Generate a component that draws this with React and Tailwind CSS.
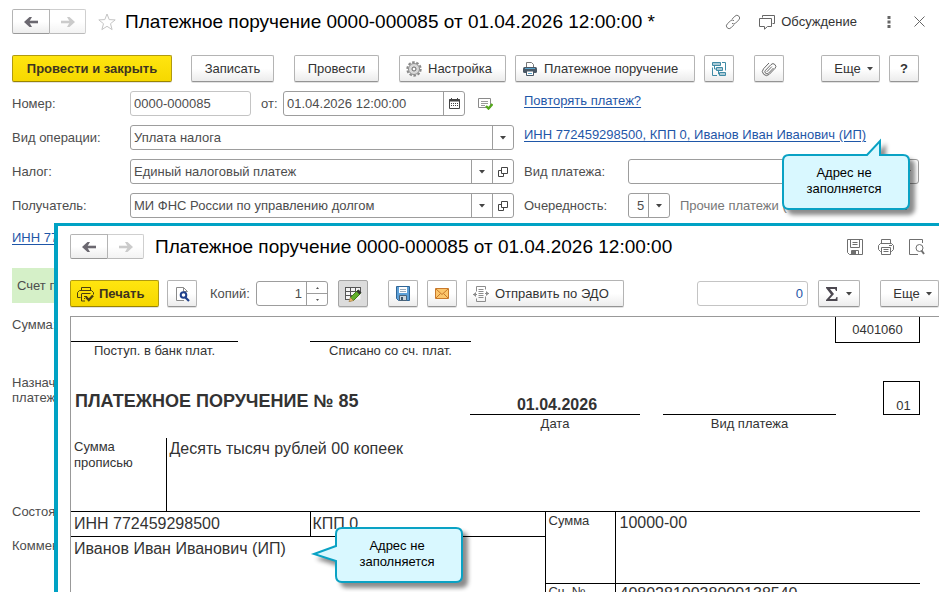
import { useState } from 'react'

function Icon({ w = 16, h = 16, children, className = '' }) {
  return (
    <svg
      width={w}
      height={h}
      viewBox={`0 0 ${w} ${h}`}
      fill="none"
      stroke="currentColor"
      aria-hidden="true"
      className={`shrink-0 ${className}`}
    >
      {children}
    </svg>
  )
}

function Caret() {
  return (
    <Icon w={6} h={4} className="text-[#444]">
      <path d="M0 0h6L3 3.5z" fill="currentColor" stroke="none" />
    </Icon>
  )
}

function ArrowIcon({ flip }) {
  return (
    <Icon w={14} h={12} className={flip ? 'rotate-180 text-[#cbcbcb]' : 'text-[#6b6870]'}>
      <path d="M14 6H3" strokeWidth="2.6" />
      <path d="M0 6 5.500 1H8L5 6l3 5H5.500z" fill="currentColor" stroke="none" />
    </Icon>
  )
}

function LinkIcon() {
  return (
    <Icon className="text-[#777]">
      <path d="M7 5.2 10 2.1a2.6 2.6 0 0 1 3.8 3.8l-3.2 3.2a2.6 2.6 0 0 1-3.6.2" />
      <path d="m9 10.8-3 3a2.6 2.6 0 0 1-3.8-3.8l3.2-3.1A2.6 2.6 0 0 1 9 6.7" />
    </Icon>
  )
}

function ChatIcon() {
  return (
    <Icon w={17} className="text-[#666]">
      <path d="M3.5 3.5v-2h12v8h-2" />
      <path d="M.5 4.5h12v8h-4l-3 2.7v-2.7h-5z" strokeLinejoin="round" />
    </Icon>
  )
}

function GearIcon() {
  return (
    <Icon className="text-[#8a8a8a]">
      <circle cx="8" cy="8" r="6.7" strokeWidth="2" strokeDasharray="2.6 1.61" />
      <circle cx="8" cy="8" r="5.5" fill="#d9d9d9" />
      <circle cx="8" cy="8" r="2" fill="#fff" stroke="#666" />
    </Icon>
  )
}

function PrinterIcon() {
  return (
    <Icon>
      <path d="M4.5 6V1.5h5l2 2V6" fill="#fff" stroke="#777" />
      <rect x="1" y="6" width="14" height="6" rx="1.5" fill="#4a5866" stroke="none" />
      <path d="M3 7.5h10" stroke="#5aa5cc" />
      <path d="M4.5 10h7v4.5h-7z" fill="#fff" stroke="#4a5866" />
      <path d="M6 12.5h4" stroke="#5aa5cc" />
    </Icon>
  )
}

function TreeIcon() {
  return (
    <Icon className="text-[#3f8aa5]">
      <path d="M1.5 1.5h8v3h-8zM5.5 6.5h6v3h-6zM8.500 11.5h6v3h-6z" fill="#a9cad6" />
      <path d="M3.5 4.5V8h2M7.5 9.5V13h1M11 1.5h3.5v8M1.5 6.5v8H6" />
    </Icon>
  )
}

function ClipIcon() {
  return (
    <Icon className="text-[#666]">
      <path d="m12.5 7-5 5.2a2 2 0 0 1-3-2.9l5.5-5.7a2.7 2.7 0 0 1 4 3.8l-5.8 6a4 4 0 0 1-5.700-5.600L8 2" />
      <path d="m5.8 10.8 5-5.2" />
    </Icon>
  )
}

function CalendarIcon() {
  return (
    <Icon w={11} h={11} className="text-[#444]">
      <path d="M.5 1.5h10v9H.5z" />
      <path d="M0 2.5h11" strokeWidth="2" />
      <path d="M2.5 0v2M8.5 0v2" />
      <path d="M2 5.5h7M2 7.5h7" strokeDasharray="1 1" />
    </Icon>
  )
}

function PostedIcon() {
  return (
    <Icon w={15} h={13}>
      <path d="M.5 1.5h12v9H.5z" stroke="#8a8a8a" fill="#fff" />
      <path d="M3 4.5h7M3 6.5h7M3 8.5h4" stroke="#999" />
      <path d="m8 9 2.5 2.5L14.500 7" stroke="#55a81c" strokeWidth="2.4" />
    </Icon>
  )
}

function OpenIcon() {
  return (
    <Icon w={10} h={10} className="text-[#444]">
      <path d="M3.5.5h6v6h-6zM3.5 3.5h-3v6h5v-3" />
    </Icon>
  )
}

function DiskIcon() {
  return (
    <Icon className="text-[#6f6f6f]">
      <path d="M.5.5h15v15H2.500l-2-2z" />
      <path d="M3.5.5v8h9v-8M5.5 3.5h5M5.5 5.500h5M4.5 15.5v-4h7v4" />
      <path d="M5 12h4v3H5z" fill="currentColor" stroke="none" />
    </Icon>
  )
}

function PrintOutlineIcon() {
  return (
    <Icon className="text-[#6f6f6f]">
      <path d="M3.5 4.5v-4h9v4M3.5 12.5h-1l-2-2v-4l2-2h11l2 2v4l-2 2h-1" />
      <path d="M3.5 8.5h9v7h-9zM5.5 10.5h5M5.5 12.5h5M11 6.5h3" />
    </Icon>
  )
}

function PreviewOutlineIcon() {
  return (
    <Icon className="text-[#6f6f6f]">
      <path d="M13.5 4V.5H.5v15H9" />
      <circle cx="10.5" cy="9" r="3.5" />
      <path d="m12.500 11.500 2.5 3.500" strokeWidth="2" />
    </Icon>
  )
}

function PrintCheckIcon() {
  return (
    <Icon w={17} className="text-[#4a3f10]">
      <path d="M4.5 4.5v-3h9v3M3.5 11.5h-3v-5l2-2h12l2 2v2M4.5 7.5h9" />
      <path d="M4.5 8v7H8M7 10.5h3M7 12.5h1" />
      <path d="m9 11 2.800 3L16 9.500" strokeWidth="2.4" />
    </Icon>
  )
}

function PreviewIcon() {
  return (
    <Icon w={15}>
      <path d="M9 14.5H1.5v-13h7l4 4" fill="#fff" stroke="#8a8a8a" />
      <path d="M8.5 1.5v4h4" stroke="#8a8a8a" />
      <circle cx="8.5" cy="9" r="2.8" fill="#fff" stroke="#20418c" strokeWidth="2" />
      <path d="m10.5 11.5 3.5 3.5" stroke="#20418c" strokeWidth="2.2" />
    </Icon>
  )
}

function EditTableIcon() {
  return (
    <Icon w={17}>
      <path d="M.5 1.500h15v12H.5z" fill="#f4f4f4" stroke="none" />
      <path d="M0 1.5h16M0 5.5h16M0 9.5h12M0 13.5h5M.5 1v13M5.5 1v12M10.5 1v6M15.5 1v4" stroke="#555" />
      <path d="m5.5 11.5 7-7 3 3-7 7z" fill="#62b02c" stroke="#3f7d15" />
      <path d="m11.500 5.500 2-2 3 3-2 2z" fill="#333" stroke="none" />
      <path d="m5.3 11.3 3.2 3.2L4 16z" fill="#e3b36a" stroke="#8a6a35" strokeWidth=".5" />
    </Icon>
  )
}

function SaveIcon() {
  return (
    <Icon w={14} h={15}>
      <path d="M.5.5h13v14H2.500l-2-2z" fill="#5da0d8" stroke="#2f6596" />
      <path d="M3 1h8v6H3z" fill="#fff" stroke="none" />
      <path d="M4 3.5h6M4 5.5h6" stroke="#9ab" />
      <path d="M3.5 9.5h7v5h-7z" fill="#c9d4dc" stroke="#4a6379" />
      <path d="M5 11h2v3H5z" fill="#3c5468" stroke="none" />
    </Icon>
  )
}

function MailIcon() {
  return (
    <Icon w={14} h={11}>
      <path d="M.5.5h13v10H.5z" fill="#fbc66d" stroke="#c9792b" />
      <path d="m1 1 6 5.5L13 1M1 10l4.500-4.500M13 10 8.500 5.500" stroke="#c9792b" />
    </Icon>
  )
}

function EdoIcon() {
  return (
    <Icon className="text-[#8c8c8c]">
      <path d="M3.5 5.500v-5h9v3M12.5 10.500v5h-9v-3" />
      <path d="M5.500 3.5h5M5.500 5.5h5M5.500 7.5h5M5.500 9.5h5M5.500 11.500h5" />
      <path d="M4 8.500H0M16 7.500h-4" />
      <path d="m0 8.500 3-2.500v5zM16 7.500 13 5v5z" fill="currentColor" stroke="none" />
    </Icon>
  )
}

function SigmaIcon() {
  return (
    <Icon w={12} h={14} className="text-[#4c4850]">
      <path d="M0 0h11v4h-1L9 2H4l4 5-4.500 5H9.500l1-2h1v4H0v-1l5-5.500L0 1z" fill="currentColor" stroke="none" />
    </Icon>
  )
}

function Button({ children, primary, pressed, start, className = '', ...rest }) {
  const look = primary
    ? 'border-[#b09a10] border-b-[#9a8400] bg-linear-to-b from-[#ffe50f] to-[#f6d800] font-bold text-[#3d3420]'
    : pressed
      ? 'border-[#a5a5a5] bg-[#dcdcdc] text-[#333]'
      : 'border-[#b4b4b4] border-b-[#949494] bg-linear-to-b from-white from-50% to-[#ececec] text-[#333]'
  const align = start ? 'justify-start pl-1.5' : 'justify-center'
  return (
    <button
      type="button"
      className={`flex h-[27px] shrink-0 items-center rounded-[2px] border shadow-[0_1px_0_#e2e2e2] ${align} ${look} ${className}`}
      {...rest}
    >
      {children}
    </button>
  )
}

function NavButtons() {
  return (
    <div className="flex h-[25px] shrink-0">
      <button
        type="button"
        aria-label="Назад"
        className="flex w-[38px] items-center justify-center rounded-l-[2px] border border-[#b4b4b4] border-b-[#999] bg-linear-to-b from-white from-50% to-[#ededed]"
      >
        <ArrowIcon />
      </button>
      <button
        type="button"
        aria-label="Вперед"
        className="flex w-9 items-center justify-center rounded-r-[2px] border border-l-0 border-[#cfcfcf] border-b-[#bbb] bg-linear-to-b from-white from-50% to-[#f3f3f3]"
      >
        <ArrowIcon flip />
      </button>
    </div>
  )
}

const fieldBox = 'flex h-[25px] min-w-0 overflow-hidden rounded-[3px] border bg-white'

function SelectField({ id, value, openable, className = '' }) {
  return (
    <div className={`${fieldBox} border-[#9d9d9d] ${className}`}>
      <div className="grid min-w-0 flex-1">
        <select id={id} className="col-start-1 row-start-1 min-w-0 appearance-none px-[3px] outline-none">
          <option>{value}</option>
        </select>
        <span className="pointer-events-none col-start-1 row-start-1 flex w-[21px] items-center justify-center justify-self-end border-l border-[#9d9d9d]">
          <Caret />
        </span>
      </div>
      {openable && (
        <button type="button" aria-label="Открыть" className="flex w-[21px] items-center justify-center border-l border-[#9d9d9d]">
          <OpenIcon />
        </button>
      )}
    </div>
  )
}

const calloutShapes = {
  top: 'M32 18H110L123 4V18H146Q152 18 152 24V66Q152 72 146 72H32Q26 72 26 66V24Q26 18 32 18z',
  left: 'M32 18H146Q152 18 152 24V66Q152 72 146 72H32Q26 72 26 66V51L4 44L26 36V24Q26 18 32 18z',
}

// Box is 126x54 with a 26px / 18px margin that leaves room for the tail and the shadow.
function Callout({ tail, className }) {
  return (
    <div className={`pointer-events-none absolute z-20 h-[86px] w-[166px] ${className}`}>
      <svg width="166" height="86" viewBox="0 0 166 86" aria-hidden="true" className="drop-shadow-[5px_5px_2px_rgba(0,0,0,0.45)]">
        <path d={calloutShapes[tail]} fill="#d9f8ff" stroke="#0aa2c4" strokeWidth="2" />
      </svg>
      <p className="absolute inset-x-0 top-0 pt-7 pr-[18px] pl-[26px] text-center leading-4 text-black">
        Адрес не
        <br />
        заполняется
      </p>
    </div>
  )
}

function PaymentForm() {
  return (
    <main className="px-3 pt-[9px] pr-5 text-[#4d4d4d]">
      <header className="flex h-[25px] items-center">
        <NavButtons />
        <button type="button" aria-label="В избранное" className="ml-3 text-[#c4c4c4]">
          <Icon w={18} h={18}>
            <path d="m9 1 2.2 5.600 6 .3-4.700 3.800 1.600 5.900L9 13.300l-5.100 3.300 1.600-5.900L.8 6.900l6-.3z" />
          </Icon>
        </button>
        <h1 className="ml-[9px] text-[19px] leading-6 whitespace-nowrap text-black">
          Платежное поручение 0000-000085 от 01.04.2026 12:00:00 *
        </h1>
        <div className="ml-auto flex shrink-0 items-center text-[#333]">
          <button type="button" aria-label="Ссылка">
            <LinkIcon />
          </button>
          <button type="button" className="ml-[18px] flex items-center gap-[5px]">
            <ChatIcon />
            Обсуждение
          </button>
          <button type="button" aria-label="Меню" className="ml-[30px]">
            <Icon w={4} h={12} className="text-[#666]">
              <path d="M.5 0h3v3h-3zM.5 4.5h3v3h-3zM.5 9h3v3h-3z" fill="currentColor" stroke="none" />
            </Icon>
          </button>
          <button type="button" aria-label="Закрыть" className="-mr-1.5 ml-[23px]">
            <Icon w={11} h={11} className="text-[#666]">
              <path d="m.5.5 10 10M10.5.5l-10 10" />
            </Icon>
          </button>
        </div>
      </header>

      <div className="mt-[21px] flex">
        <Button primary className="w-40">Провести и закрыть</Button>
        <Button className="ml-[19px] w-[83px]">Записать</Button>
        <Button className="ml-5 w-[85px]">Провести</Button>
        <Button start className="ml-5 w-[107px] gap-1.5">
          <GearIcon />
          Настройка
        </Button>
        <Button start className="ml-[9px] w-[180px] gap-1.5">
          <PrinterIcon />
          Платежное поручение
        </Button>
        <Button className="ml-[9px] w-[30px]" aria-label="Структура подчиненности">
          <TreeIcon />
        </Button>
        <Button className="ml-5 w-[30px]" aria-label="Присоединенные файлы">
          <ClipIcon />
        </Button>
        <Button className="ml-auto w-[59px] gap-1.5 pl-1.5">
          Еще
          <Caret />
        </Button>
        <Button className="ml-[9px] w-[30px] font-bold">?</Button>
      </div>

      <div className="relative mt-[9px] grid grid-cols-[502px_minmax(0,1fr)] gap-x-[10px] gap-y-[9px]">
        <div className="flex items-center">
          <label htmlFor="number" className="w-[118px] shrink-0">Номер:</label>
          <div className={`${fieldBox} w-[121px] border-[#c4c4c4]`}>
            <input id="number" defaultValue="0000-000085" className="w-full px-[3px] outline-none" />
          </div>
          <label htmlFor="date" className="ml-2.5 w-[22px]">от:</label>
          <div className={`${fieldBox} w-[182px] border-[#9d9d9d]`}>
            <input id="date" defaultValue="01.04.2026 12:00:00" className="min-w-0 flex-1 px-[3px] outline-none" />
            <button type="button" aria-label="Выбрать дату" className="flex w-[21px] items-center justify-center border-l border-[#9d9d9d]">
              <CalendarIcon />
            </button>
          </div>
          <span className="ml-[13px]">
            <PostedIcon />
          </span>
        </div>
        <a href="#repeat" className="mt-0.5 justify-self-start text-[#1f57a8] underline underline-offset-2">Повторять платеж?</a>

        <div className="flex items-center">
          <label htmlFor="operation" className="w-[118px] shrink-0">Вид операции:</label>
          <SelectField id="operation" value="Уплата налога" className="flex-1" />
        </div>
        <a href="#payer" className="mt-0.5 justify-self-start text-[#1f57a8] underline underline-offset-2">
          ИНН 772459298500, КПП 0, Иванов Иван Иванович (ИП)
        </a>

        <div className="flex items-center">
          <label htmlFor="tax" className="w-[118px] shrink-0">Налог:</label>
          <SelectField id="tax" value="Единый налоговый платеж" openable className="flex-1" />
        </div>
        <div className="flex items-center">
          <label htmlFor="kind" className="w-[104px] shrink-0">Вид платежа:</label>
          <SelectField id="kind" value="" className="flex-1" />
        </div>

        <div className="flex items-center">
          <label htmlFor="payee" className="w-[118px] shrink-0">Получатель:</label>
          <SelectField id="payee" value="МИ ФНС России по управлению долгом" openable className="flex-1" />
        </div>
        <div className="flex items-center">
          <label htmlFor="order" className="w-[104px] shrink-0">Очередность:</label>
          <SelectField id="order" value="5" className="w-[42px] shrink-0 [&_select]:pl-2" />
          <span className="mr-1.5 ml-2.5 truncate text-[#777]">Прочие платежи (в т.ч. налоги и взносы в бюджет)</span>
        </div>

        <Callout tail="top" className="-right-1 top-[46px]" />
      </div>

      <div className="mt-3">
        <a href="#payee-details" className="text-[#1f57a8] underline underline-offset-2">ИНН 7727406020</a>
      </div>
      <div className="mt-[22px] flex h-[35px] items-center bg-[#d5f0c8] px-[5px]">Счет получателя</div>
      <div className="mt-[14px]">Сумма:</div>
      <div className="mt-[42px] leading-[15px]">
        Назначение
        <br />
        платежа:
      </div>
      <div className="mt-[99px]">Состояние:</div>
      <div className="mt-[18px]">Комментарий:</div>
    </main>
  )
}

function PrintedOrder() {
  return (
    <div className="mt-[9px] ml-3 min-h-0 flex-1 overflow-hidden border-t border-l border-[#999] pr-[19px] text-[#333]">
      <div className="flex">
        <div className="mt-6 w-[167px] border-t border-black pt-px text-center">Поступ. в банк плат.</div>
        <div className="mt-6 ml-[72px] w-[161px] border-t border-black pt-px text-center">Списано со сч. плат.</div>
        <div className="ml-auto flex h-[26px] w-[85px] items-center justify-center border border-t-0 border-black">0401060</div>
      </div>

      <div className="mt-[22px] flex h-[53px]">
        <h2 className="w-[399px] pt-2 pl-1 text-[18px] leading-6 font-bold">ПЛАТЕЖНОЕ ПОРУЧЕНИЕ № 85</h2>
        <div className="w-[170px] text-center">
          <div className="flex h-[34px] items-end justify-center border-b border-black pl-1 text-[16px] leading-[18px] font-bold">01.04.2026</div>
          <div className="pt-px">Дата</div>
        </div>
        <div className="ml-[23px] w-[173px] text-center">
          <div className="h-[34px] border-b border-black" />
          <div className="pt-px">Вид платежа</div>
        </div>
        <div className="ml-auto flex h-[34px] w-[37px] items-end justify-center border border-black pl-1">01</div>
      </div>

      <table className="mt-1 w-full table-fixed border-collapse text-left align-top text-[16px] leading-5">
        <colgroup>
          <col className="w-[95px]" />
          <col className="w-36" />
          <col className="w-[235px]" />
          <col className="w-[70px]" />
          <col />
        </colgroup>
        <tbody>
          <tr className="h-[73px]">
            <th className="border-r border-black pt-px pl-[3px] align-top text-[13px] leading-4 font-normal">
              Сумма
              <br />
              прописью
            </th>
            <td colSpan={4} className="pt-px pl-[3px] align-top">Десять тысяч рублей 00 копеек</td>
          </tr>
          <tr className="h-[25px]">
            <td colSpan={2} className="border-y border-r border-black pl-[3px]">ИНН 772459298500</td>
            <td className="border-y border-black pl-0.5">КПП 0</td>
            <th rowSpan={2} className="border border-black pt-px pl-[3px] align-top text-[13px] leading-4 font-normal">Сумма</th>
            <td rowSpan={2} className="border-y border-black pt-px pl-1 align-top">10000-00</td>
          </tr>
          <tr className="h-[47px]">
            <td colSpan={3} rowSpan={2} className="relative pt-0.5 pl-[3px] align-top">
              Иванов Иван Иванович (ИП)
              <Callout tail="left" className="-top-[27px] left-[239px] text-[13px]" />
            </td>
          </tr>
          <tr className="h-[47px]">
            <th className="border-x border-black pl-[3px] align-top text-[13px] leading-4 font-normal">Сч. №</th>
            <td className="pl-1 align-top">40802810038000138540</td>
          </tr>
        </tbody>
      </table>
    </div>
  )
}

function PrintWindow() {
  const [copies, setCopies] = useState(1)

  return (
    <section className="absolute top-[223px] right-0 bottom-0 left-[54px] z-10 flex flex-col border-t-[3px] border-l-4 border-[#00a2c4] bg-white pt-2 text-[#4d4d4d]">
      <header className="flex h-[25px] items-center pr-3.5 pl-3">
        <NavButtons />
        <h2 className="ml-[11px] text-[19px] leading-6 whitespace-nowrap text-black">
          Платежное поручение 0000-000085 от 01.04.2026 12:00:00
        </h2>
        <div className="ml-auto flex shrink-0 gap-[15px]">
          <button type="button" aria-label="Сохранить">
            <DiskIcon />
          </button>
          <button type="button" aria-label="Печать">
            <PrintOutlineIcon />
          </button>
          <button type="button" aria-label="Предварительный просмотр">
            <PreviewOutlineIcon />
          </button>
        </div>
      </header>

      <div className="mt-[21px] flex items-center pl-3">
        <Button primary start className="w-[89px] gap-[5px]">
          <PrintCheckIcon />
          Печать
        </Button>
        <Button className="ml-2 w-[30px]" aria-label="Просмотр">
          <PreviewIcon />
        </Button>
        <label htmlFor="copies" className="ml-[13px] w-[46px] whitespace-nowrap">Копий:</label>
        <div className={`${fieldBox} w-[72px] border-[#9d9d9d]`}>
          <input
            id="copies"
            value={copies}
            onChange={(e) => setCopies(Number(e.target.value) || 1)}
            className="min-w-0 flex-1 px-1 text-right outline-none"
          />
          <div className="flex w-[21px] flex-col border-l border-[#9d9d9d]">
            <button type="button" aria-label="Больше" onClick={() => setCopies(copies + 1)} className="flex flex-1 items-center justify-center border-b border-[#9d9d9d]">
              <Icon w={3} h={2}>
                <path d="M0 2h3L1.500 0z" fill="#555" stroke="none" />
              </Icon>
            </button>
            <button type="button" aria-label="Меньше" onClick={() => setCopies(Math.max(1, copies - 1))} className="flex flex-1 items-center justify-center">
              <Icon w={3} h={2}>
                <path d="M0 0h3L1.500 2z" fill="#555" stroke="none" />
              </Icon>
            </button>
          </div>
        </div>
        <Button pressed className="ml-2.5 w-[30px]" aria-label="Редактирование">
          <EditTableIcon />
        </Button>
        <Button className="ml-5 w-[30px]" aria-label="Сохранить на диск">
          <SaveIcon />
        </Button>
        <Button className="ml-[9px] w-[30px]" aria-label="Отправить по почте">
          <MailIcon />
        </Button>
        <Button start className="ml-[9px] w-[158px] gap-1.5">
          <EdoIcon />
          Отправить по ЭДО
        </Button>
        <div className={`${fieldBox} ml-auto w-[111px] border-[#c4c4c4]`}>
          <input aria-label="Сумма выделенных ячеек" defaultValue="0" className="w-full px-1 text-right text-[#1f57a8] outline-none" />
        </div>
        <Button className="ml-2.5 w-[42px] gap-2" aria-label="Вычислить">
          <SigmaIcon />
          <Caret />
        </Button>
        <Button className="ml-5 w-[59px] gap-1.5 pl-1.5">
          Еще
          <Caret />
        </Button>
      </div>

      <PrintedOrder />
    </section>
  )
}

export default function App() {
  return (
    <div className="relative h-screen overflow-hidden bg-white font-['Liberation_Sans',Arial,sans-serif] text-[13px] leading-4">
      <PaymentForm />
      <PrintWindow />
    </div>
  )
}
